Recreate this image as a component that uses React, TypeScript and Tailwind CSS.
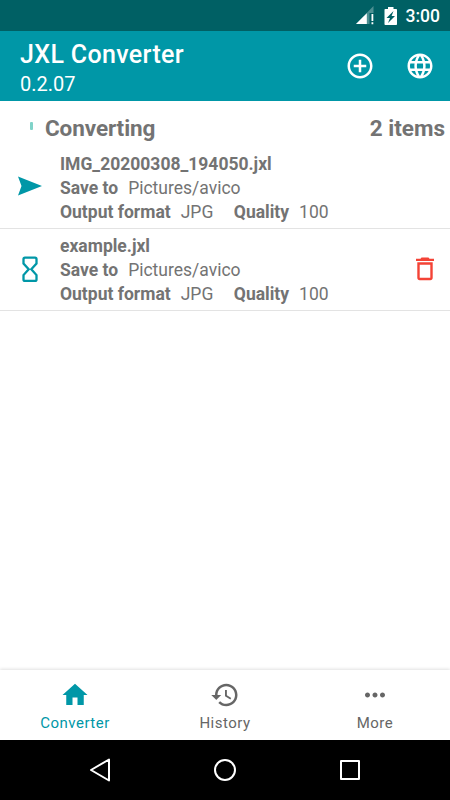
import React, { useState } from "react";

const items = [
  { name: "IMG_20200308_194050.jxl", path: "Pictures/avico", format: "JPG", quality: 100, running: true },
  { name: "example.jxl", path: "Pictures/avico", format: "JPG", quality: 100, running: false },
];

const StatusBar = () => {
  return (
    <div className="flex h-[31px] shrink-0 items-center justify-end bg-[#006064] pr-[10px] text-white">
      {/* signal */}
      <svg className="mr-[10px] mt-px h-[20px] w-[18px]" viewBox="0 0 18 20">
        <path d="M17.500 0v7h-4v11H0z" fill="#fff" fillOpacity="0.3" />
        <path d="M10.800 7.200V18H0z" fill="#fff" />
        <path d="M15.500 8h1.800v7h-1.800zM15.500 16.200h1.800v2h-1.800z" fill="#fff" />
      </svg>
      {/* battery */}
      <svg className="mr-[8px] h-[20px] w-[14px]" viewBox="0 0 14 20">
        <path
          fill="#fff"
          fillRule="evenodd"
          d="M4 1h5.500v2h2.700c.5 0 .8.300.8.800v14.400c0 .5-.3.800-.8.800H1.300c-.5 0-.8-.3-.8-.8V3.800c0-.5.300-.8.800-.8H4zM9.500 5 2.500 12h3.500L4 17l7-7H7.600z"
        />
      </svg>
      <span className="pt-[2px] text-[17.500px] font-medium leading-[31px]">3:00</span>
    </div>
  );
};

const Header = () => {
  return (
    <div className="flex h-[70px] shrink-0 items-center justify-between bg-[#0097a7] pl-[20px] pr-[15px] text-white">
      <div>
        <h1 className="mt-[5px] text-[25px] font-medium leading-[31px] tracking-[0.350px]">JXL Converter</h1>
        <h6 className="text-[20px] leading-[28px]">0.2.07</h6>
      </div>
      <div className="flex gap-[30px]">
        <svg className="h-[30px] w-[30px]" viewBox="0 0 24 24" fill="currentColor">
          <path d="M13 7h-2v4H7v2h4v4h2v-4h4v-2h-4V7zm-1-5C6.480 2 2 6.480 2 12s4.480 10 10 10 10-4.480 10-10S17.520 2 12 2zm0 18c-4.410 0-8-3.590-8-8s3.590-8 8-8 8 3.590 8 8-3.590 8-8 8z" />
        </svg>
        <svg className="h-[30px] w-[30px]" viewBox="0 0 24 24" fill="currentColor">
          <path d="M11.990 2C6.470 2 2 6.480 2 12s4.470 10 9.990 10C17.520 22 22 17.520 22 12S17.520 2 11.990 2zm6.930 6h-2.950c-.32-1.250-.78-2.450-1.380-3.560 1.840.63 3.370 1.910 4.330 3.560zM12 4.040c.83 1.200 1.480 2.530 1.910 3.960h-3.820c.43-1.430 1.080-2.760 1.910-3.960zM4.260 14C4.100 13.360 4 12.690 4 12s.1-1.360.26-2h3.380c-.08.66-.14 1.320-.14 2s.06 1.340.14 2H4.260zm.82 2h2.950c.32 1.250.78 2.450 1.380 3.560-1.840-.63-3.370-1.900-4.330-3.560zm2.950-8H5.080c.96-1.660 2.490-2.930 4.330-3.560C8.810 5.550 8.350 6.750 8.030 8zM12 19.960c-.83-1.200-1.480-2.530-1.910-3.960h3.820c-.43 1.430-1.080 2.760-1.910 3.960zM14.340 14H9.660c-.09-.66-.16-1.320-.16-2s.07-1.350.16-2h4.680c.09.65.16 1.320.16 2s-.07 1.340-.16 2zm.25 5.560c.6-1.110 1.060-2.310 1.380-3.560h2.950c-.96 1.650-2.490 2.930-4.330 3.560zM16.360 14c.08-.66.14-1.320.14-2s-.06-1.340-.14-2h3.380c.16.64.26 1.310.26 2s-.1 1.360-.26 2h-3.380z" />
        </svg>
      </div>
    </div>
  );
};

const SendIcon = () => (
  <svg className="mb-[3px] h-[30px] w-[30px]" viewBox="0 0 30 30">
    <path d="M3 5.500 27 15 3 24.500 6.500 15z" fill="#0097a7" />
  </svg>
);

const HourglassIcon = () => (
  <svg className="mb-px h-[30px] w-[30px]" viewBox="0 0 30 30" fill="none" stroke="#0097a7" strokeWidth="2.300">
    <path d="M10 3.700h10c1 0 1.500.500 1.500 1.500v4.300L16.300 15.300l5.200 5.800v4.300c0 1-.5 1.500-1.500 1.500H10c-1 0-1.500-.5-1.500-1.500v-4.300l5.200-5.800-5.200-5.800V5.200c0-1 .5-1.500 1.500-1.500z" />
  </svg>
);

const TrashIcon = () => (
  <svg className="mb-[2px] h-[30px] w-[30px]" viewBox="0 0 30 30" fill="#f44336">
    <path d="M11.500 3.500h7l1 1.200h4.500V7H6V4.700h4.500z" />
    <path fillRule="evenodd" d="M7.300 8.300h15.400v15.500c0 1.500-.9 2.400-2.400 2.400H9.700c-1.500 0-2.400-.9-2.400-2.400zM9.700 10.700v13h10.600v-13z" />
  </svg>
);

const App = () => {
  const [tab, setTab] = useState("Converter");
  const tabClass = (name: string) =>
    "flex flex-1 flex-col items-center pt-[10px] " + (tab === name ? "text-[#0097a7]" : "text-[#666666]");

  return (
    <div className="flex h-[800px] w-[450px] flex-col overflow-hidden bg-white font-[Roboto,sans-serif] text-[#737373]">
      <StatusBar />
      <Header />
      <div className="flex h-[46px] shrink-0 items-center pl-[30px] pr-[5px] pt-[8px] text-[22.500px] font-bold">
        {/* progress spinner */}
        <div className="mb-[4px] mr-[12px] h-[8px] w-[3px] rounded-[1px] bg-[#80d3c9]"></div>
        <h2 className="flex-1 pt-px tracking-[-0.100px]">Converting</h2>
        <h2 className="pt-px">2 items</h2>
      </div>
      {items.map((item) => (
        <div key={item.name} className="flex h-[82px] shrink-0 items-center border-b border-[#e3e3e3] pl-[15px] pr-[10px]">
          {item.running ? <SendIcon /> : <HourglassIcon />}
          <div className="ml-[15px] flex-1 text-[17.500px] leading-[24px]">
            <div className="font-bold">{item.name}</div>
            <div className="flex gap-[10px]">
              <span className="font-bold">Save to</span>
              <span>{item.path}</span>
            </div>
            <div className="flex gap-[10px]">
              <span className="font-bold">Output format</span>
              <span>{item.format}</span>
              <span className="ml-[10.500px] font-bold">Quality</span>
              <span>{item.quality}</span>
            </div>
          </div>
          {!item.running && <TrashIcon />}
        </div>
      ))}
      <div className="flex-1"></div>
      {/* bottom tabs */}
      <div className="flex h-[70px] shrink-0 bg-white text-[15px] tracking-[0.500px] shadow-[0_-1px_3px_rgba(0,0,0,0.12)]">
        <button className={tabClass("Converter")} onClick={() => setTab("Converter")}>
          <svg className="h-[30px] w-[30px]" viewBox="0 0 24 24" fill="currentColor">
            <path d="M10 20v-6h4v6h5v-8h3L12 3 2 12h3v8z" />
          </svg>
          <span className="mt-[3px] leading-[20px]">Converter</span>
        </button>
        <button className={tabClass("History")} onClick={() => setTab("History")}>
          <svg className="h-[30px] w-[30px]" viewBox="0 0 24 24" fill="currentColor">
            <path d="M13 3c-4.970 0-9 4.030-9 9H1l3.890 3.890.07.14L9 12H6c0-3.870 3.130-7 7-7s7 3.130 7 7-3.130 7-7 7c-1.930 0-3.680-.79-4.940-2.060l-1.420 1.420C8.270 19.990 10.510 21 13 21c4.970 0 9-4.030 9-9s-4.030-9-9-9zm-1 5v5l4.280 2.540.72-1.210-3.500-2.080V8H12z" />
          </svg>
          <span className="mt-[3px] leading-[20px]">History</span>
        </button>
        <button className={tabClass("More")} onClick={() => setTab("More")}>
          <svg className="h-[30px] w-[30px]" viewBox="0 0 24 24" fill="currentColor">
            <path d="M6 10c-1.100 0-2 .9-2 2s.9 2 2 2 2-.9 2-2-.9-2-2-2zm12 0c-1.100 0-2 .9-2 2s.9 2 2 2 2-.9 2-2-.9-2-2-2zm-6 0c-1.100 0-2 .9-2 2s.9 2 2 2 2-.9 2-2-.9-2-2-2z" />
          </svg>
          <span className="mt-[3px] leading-[20px]">More</span>
        </button>
      </div>
      {/* system navigation */}
      <div className="flex h-[60px] shrink-0 items-center justify-center gap-[95px] bg-black">
        <svg className="h-[30px] w-[30px]" viewBox="0 0 30 30" fill="none" stroke="#fff" strokeWidth="2" strokeLinejoin="round">
          <path d="M24 4.500v21L6 15z" />
        </svg>
        <svg className="h-[30px] w-[30px]" viewBox="0 0 30 30" fill="none" stroke="#fff" strokeWidth="2">
          <circle cx="15" cy="15" r="10" />
        </svg>
        <svg className="h-[30px] w-[30px]" viewBox="0 0 30 30" fill="none" stroke="#fff" strokeWidth="2" strokeLinejoin="round">
          <path d="M6 6h18v18H6z" />
        </svg>
      </div>
    </div>
  );
};

export default App;
